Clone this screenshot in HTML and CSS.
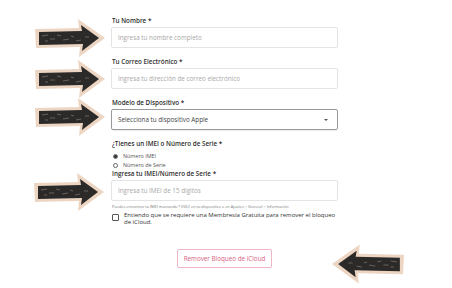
FILE: index.html
```html
<!DOCTYPE html>
<html lang="es">
<head>
<meta charset="utf-8">
<link rel="stylesheet" href="styles.css">
</head>
<body>
<div class="page">
  <form class="form">
    <div class="field">
      <label class="label">Tu Nombre *</label>
      <div class="input placeholder">Ingresa tu nombre completo</div>
    </div>
    <div class="field">
      <label class="label">Tu Correo Electrónico *</label>
      <div class="input placeholder">Ingresa tu dirección de correo electrónico</div>
    </div>
    <div class="field">
      <label class="label">Modelo de Dispositivo *</label>
      <div class="input select"><span>Selecciona tu dispositivo Apple</span><span class="caret"></span></div>
    </div>
    <div class="field radios">
      <label class="label">¿Tienes un IMEI o Número de Serie *</label>
      <div class="radio"><span class="dot checked"></span>Número IMEI</div>
      <div class="radio"><span class="dot"></span>Número de Serie</div>
    </div>
    <div class="field imei">
      <label class="label">Ingresa tu IMEI/Número de Serie *</label>
      <div class="input placeholder">Ingresa tu IMEI de 15 dígitos</div>
      <p class="help">Puedes encontrar tu IMEI marcando *#06# en tu dispositivo o en Ajustes &gt; General &gt; Información</p>
    </div>
    <div class="check">
      <span class="box"></span>
      <span class="check-text">Entiendo que se requiere una Membresía Gratuita para remover el bloqueo de iCloud.</span>
    </div>
    <div class="actions">
      <button type="button" class="btn">Remover Bloqueo de iCloud</button>
    </div>
  </form>

  <svg class="arrow a1" width="70" height="38" viewBox="0 0 70 38"><use href="#rarrow"/></svg>
  <svg class="arrow a2" width="70" height="38" viewBox="0 0 70 38"><use href="#rarrow"/></svg>
  <svg class="arrow a3" width="70" height="38" viewBox="0 0 70 38"><use href="#rarrow"/></svg>
  <svg class="arrow a4" width="70" height="38" viewBox="0 0 70 38"><use href="#rarrow"/></svg>
  <svg class="arrow a5" width="72" height="40" viewBox="0 0 70 38"><g transform="translate(70,0) scale(-1,1)"><use href="#rarrow"/></g></svg>

  <svg width="0" height="0" class="defs">
    <defs>
      <g id="rarrow">
        <polygon points="0,10 44,9 43,0 70,19 44,38 45,28 1,29" fill="#ecd6c3"/>
        <polygon points="4,13 47,12 46,6 64,19 47,32 48,25 4,26" fill="#2c2a29"/>
        <g stroke="#8a8580" stroke-width="0.6" fill="none">
          <path d="M7 17 l6 -1 M15 20 l5 0 M22 16 l4 1 M28 21 l6 -1 M36 17 l3 1 M41 22 l5 -1 M50 18 l4 0 M10 22 l3 0"/>
        </g>
      </g>
    </defs>
  </svg>
</div>
</body>
</html>
```
FILE: styles.css
```css
* { box-sizing: border-box; }
html, body { margin: 0; padding: 0; background: #fff; }
body { font-family: "Open Sans", "Liberation Sans", sans-serif; color: #333; }
.page { position: relative; width: 452px; height: 288px; overflow: hidden; }
.form { width: 227px; margin-left: 111px; padding-top: 17px; display: flex; flex-direction: column; }
.field { display: flex; flex-direction: column; margin-bottom: 10px; }
.label { font-size: 6.3px; font-weight: 600; color: #2e2e2e; padding-left: 1px; line-height: 8px; margin-bottom: 2px; }
.input { height: 21px; border: 1px solid #e4e4e4; border-radius: 2px; font-size: 6.3px; display: flex; align-items: center; padding: 0 6px; }
.placeholder { color: #a8a8a8; }
.select { border-color: #9a9a9a; color: #444; justify-content: space-between; height: 21px; box-shadow: 0 1px 1px rgba(0,0,0,0.08); }
.caret { width: 0; height: 0; border-left: 2px solid transparent; border-right: 2px solid transparent; border-top: 2px solid #555; margin-right: 3px; }
.radios { margin-top: 0; margin-bottom: 0; }
.radios .label { margin-bottom: 4px; }
.radio { display: flex; align-items: center; font-size: 5.4px; color: #555; line-height: 9px; padding-left: 2px; }
.dot { width: 5px; height: 5px; border: 0.7px solid #666; border-radius: 50%; margin-right: 5px; display: inline-flex; align-items: center; justify-content: center; }
.dot.checked::after { content: ""; width: 2.4px; height: 2.4px; border-radius: 50%; background: #333; }
.imei .label { margin-bottom: 2px; }
.imei { margin-bottom: 0; }
.help { margin: 3px 0 0 1px; font-size: 3.9px; color: #777; line-height: 5px; white-space: nowrap; }
.check { display: flex; align-items: flex-start; margin-top: 3px; padding-left: 1px; }
.box { width: 7px; height: 7px; border: 0.8px solid #555; border-radius: 1px; margin-top: 2px; margin-right: 5px; flex: none; }
.check-text { font-size: 6px; line-height: 7px; color: #333; width: 212px; }
.actions { display: flex; justify-content: center; margin-top: 23px; }
.btn { font-family: "Open Sans", "Liberation Sans", sans-serif; font-size: 6.3px; color: #d9607f; background: #fff; border: 1px solid #f0b6c6; border-radius: 2px; height: 19px; width: 95px; padding: 0; }
.arrow { position: absolute; }
.a1 { left: 35px; top: 19px; }
.a2 { left: 35px; top: 60px; }
.a3 { left: 35px; top: 98px; }
.a4 { left: 34px; top: 173px; }
.a5 { left: 332px; top: 244px; }
.defs { position: absolute; }
```
